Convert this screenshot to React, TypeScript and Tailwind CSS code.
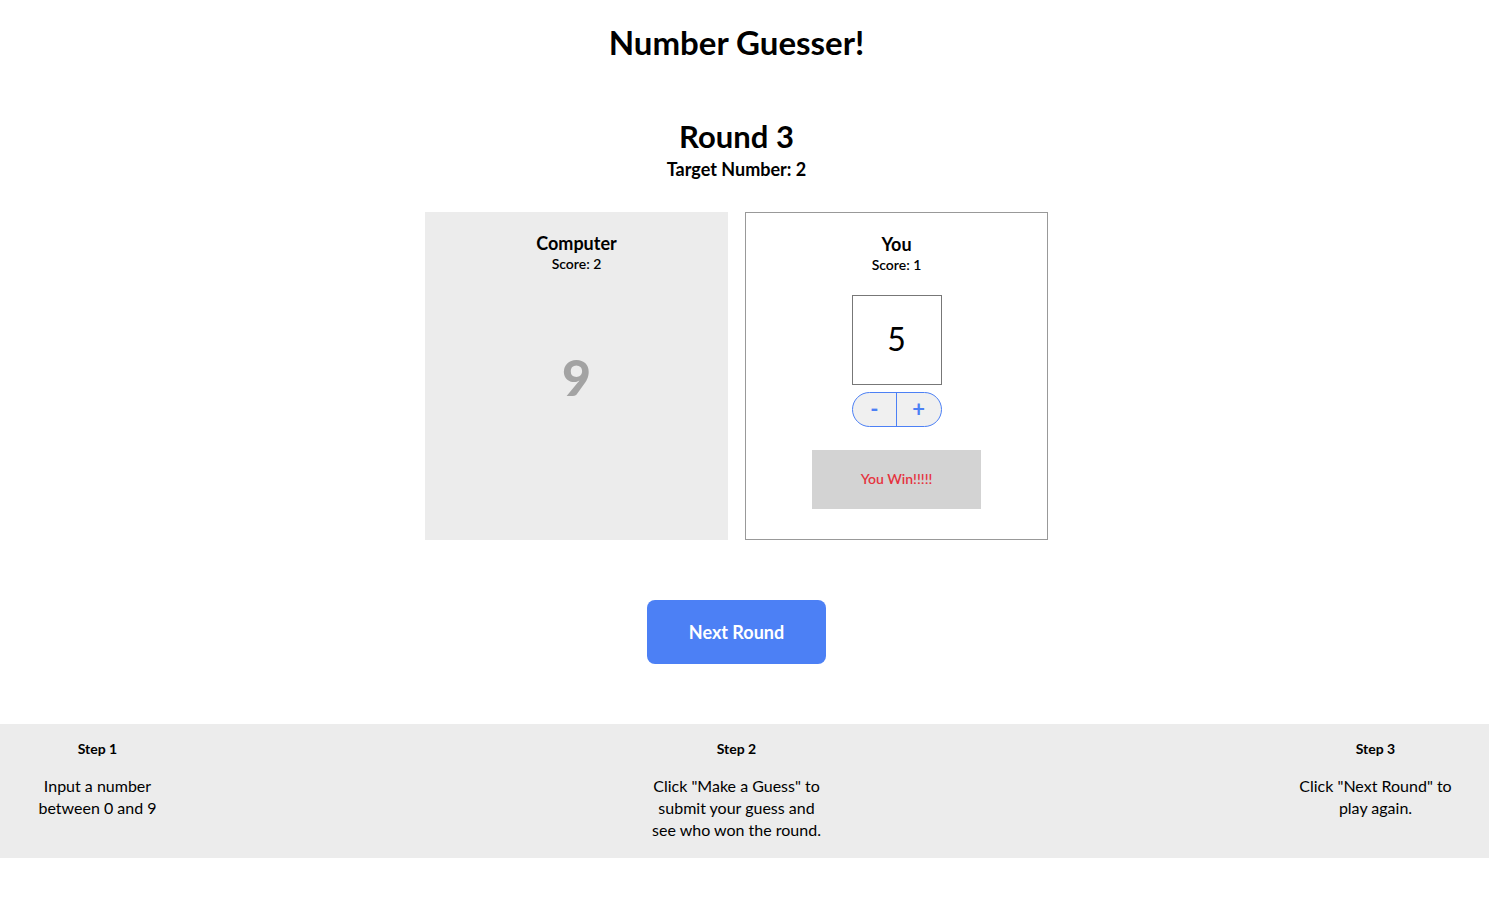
import { useState } from "react";

export default function App() {
    const [guess, setGuess] = useState(5);

    return (
        <div className="min-h-screen bg-white font-['Lato',sans-serif] text-black">
            <div className="pr-4">
                {/* Header */}
                <h1 className="pt-[22px] text-center text-[33px] font-bold leading-[40px]">
                    Number Guesser!
                </h1>

                <div className="mt-[56px] text-center">
                    <h2 className="text-[31px] font-bold leading-[36px]">Round 3</h2>
                    <p className="mt-[3px] text-[18px] font-bold leading-[24px]">
                        Target Number: 2
                    </p>
                </div>

                {/* Players */}
                <div className="mt-[31px] flex justify-center gap-[17px]">
                    <div className="flex h-[328px] w-[303px] flex-col items-center bg-[#ececec] pt-[19px]">
                        <h3 className="text-[18px] font-bold leading-[24px]">Computer</h3>
                        <p className="text-[14px] font-semibold leading-[18px]">Score: 2</p>
                        <div className="mt-[76px] text-[50px] font-black leading-[56px] text-[#a3a3a3]">
                            9
                        </div>
                    </div>

                    <div className="flex h-[328px] w-[303px] flex-col items-center border border-[#999999] bg-white pt-[19px]">
                        <h3 className="text-[18px] font-bold leading-[24px]">You</h3>
                        <p className="text-[14px] font-semibold leading-[18px]">Score: 1</p>

                        <div className="mt-[21px] flex h-[90px] w-[90px] items-center justify-center border border-[#777777] pb-[3px] text-[32px]">
                            {guess}
                        </div>

                        <div className="mt-[7px] flex h-[35px] w-[90px] overflow-hidden rounded-full border border-[#4c80f5] bg-[#f0f0f0] text-[22px] font-bold leading-none text-[#4c80f5]">
                            <button
                                onClick={() => setGuess(Math.max(0, guess - 1))}
                                className="flex flex-1 items-center justify-center pb-[2px]"
                            >
                                -
                            </button>
                            <div className="w-px bg-[#4c80f5]" />
                            <button
                                onClick={() => setGuess(Math.min(9, guess + 1))}
                                className="flex flex-1 items-center justify-center pb-[2px]"
                            >
                                +
                            </button>
                        </div>

                        <div className="mt-[23px] flex h-[59px] w-[169px] items-center justify-center bg-[#d3d3d3] pb-[2px] text-[14px] font-semibold text-[#e5333f]">
                            You Win!!!!!
                        </div>
                    </div>
                </div>

                {/* Next round */}
                <div className="mt-[60px] flex justify-center">
                    <button className="h-[64px] w-[179px] rounded-lg bg-[#4c80f5] text-[18px] font-bold text-white">
                        Next Round
                    </button>
                </div>
            </div>

            {/* Steps */}
            <div className="mt-[60px] bg-[#ececec]">
                <div className="flex justify-between pr-4 pt-[15px] pb-[17px]">
                    <div className="w-[195px] text-center">
                        <h4 className="text-[14px] font-bold leading-[20px]">Step 1</h4>
                        <p className="mt-4 text-[16px] leading-[22px]">
                            Input a number
                            <br />
                            between 0 and 9
                        </p>
                    </div>
                    <div className="w-[195px] text-center">
                        <h4 className="text-[14px] font-bold leading-[20px]">Step 2</h4>
                        <p className="mt-4 text-[16px] leading-[22px]">
                            Click "Make a Guess" to
                            <br />
                            submit your guess and
                            <br />
                            see who won the round.
                        </p>
                    </div>
                    <div className="w-[195px] text-center">
                        <h4 className="text-[14px] font-bold leading-[20px]">Step 3</h4>
                        <p className="mt-4 text-[16px] leading-[22px]">
                            Click "Next Round" to
                            <br />
                            play again.
                        </p>
                    </div>
                </div>
            </div>
        </div>
    );
}
